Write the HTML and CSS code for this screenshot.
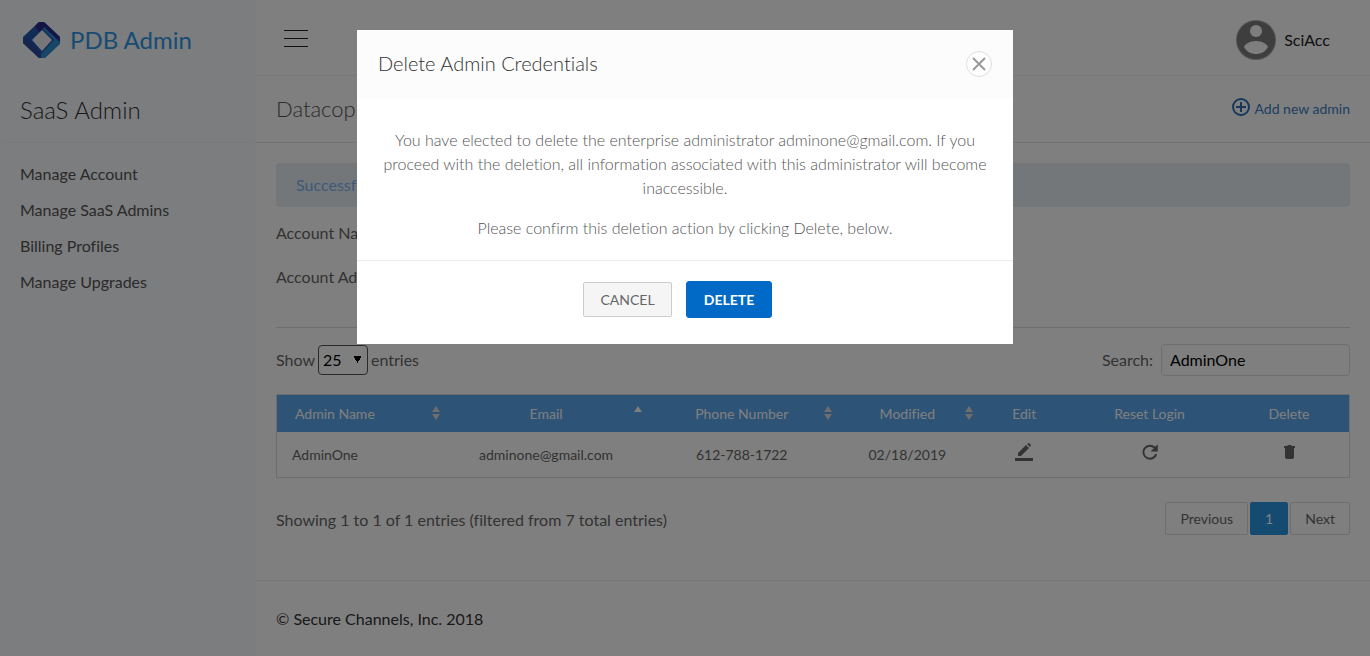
FILE: index.html
```html
<!DOCTYPE html>
<html lang="en">
<head>
<meta charset="utf-8">
<title>PDB Admin</title>
<link rel="stylesheet" href="styles.css">
</head>
<body>
<div class="app">
  <aside class="sidebar">
    <div class="sidebar-head">
      <a class="brand" href="#">
        <svg class="brand-logo" viewBox="0 0 37 36" aria-hidden="true">
          <path fill="#2457ae" d="M16 0h5l16 15v6L21 36h-5L0 21v-6z"/>
          <path fill="#28288c" d="M16 0h5l16 15v4l-4 2L21 6l-5 4-4-6z"/>
          <path fill="#2c8fd0" d="M21 5l16 15v2L22 36h-4l-1-3 14-15-11-11z"/>
          <path fill="#2a4a9c" d="M0 17l4-1 14 15v5h-2L0 21z"/>
          <path fill="#eeeef2" d="M19 8l10 10-10 11L9 18z"/>
        </svg>
        <span>PDB Admin</span>
      </a>
      <h2 class="sidebar-title">SaaS Admin</h2>
    </div>
    <nav class="menu">
      <a href="#">Manage Account</a>
      <a href="#">Manage SaaS Admins</a>
      <a href="#">Billing Profiles</a>
      <a href="#">Manage Upgrades</a>
    </nav>
  </aside>
  <div class="page">
    <header class="topbar">
      <button class="burger" type="button" aria-label="Toggle menu"><i></i><i></i><i></i></button>
      <a class="user" href="#">
        <svg class="avatar" viewBox="0 0 40 40" aria-hidden="true">
          <circle cx="20" cy="20" r="20" fill="#a6a6ac"/>
          <circle cx="20" cy="20" r="19" fill="#7c7c7c"/>
          <circle cx="20" cy="11" r="6" fill="#fcfcfc"/>
          <path fill="#fcfcfc" d="M8 27c1-3 6-6 12-6s11 3 12 6c-3 5-7 7-12 7S11 32 8 27z"/>
        </svg>
        <span>SciAcc</span>
      </a>
    </header>
    <div class="titlebar">
      <h1>Datacop</h1>
      <a class="add-link" href="#">
        <svg viewBox="1 1 18 18" aria-hidden="true"><circle cx="10" cy="10" r="8"/><path d="M10 5v10M5 10h10"/></svg>
        <span>Add new admin</span>
      </a>
    </div>
    <main class="content">
      <div class="alert">Successful</div>
      <div class="detail">Account Name</div>
      <div class="detail">Account Admin</div>
      <hr class="rule">
      <div class="controls">
        <label class="length">Show
          <select><option>25</option><option>50</option></select>
          entries</label>
        <label class="search">Search: <input type="text" value="AdminOne"></label>
      </div>
      <table class="grid">
        <colgroup><col class="c-name"><col class="c-email"><col class="c-phone"><col class="c-mod"><col class="c-edit"><col class="c-reset"><col class="c-delete"></colgroup>
        <thead>
          <tr>
            <th class="sortable left">Admin Name<svg class="sort" viewBox="0 0 8 14"><path d="M4 0l4 6H0zM0 8h8l-4 6z"/></svg></th>
            <th class="sortable">Email<svg class="sort on" viewBox="0 0 8 14"><path d="M4 0l4 6H0z"/></svg></th>
            <th class="sortable">Phone Number<svg class="sort" viewBox="0 0 8 14"><path d="M4 0l4 6H0zM0 8h8l-4 6z"/></svg></th>
            <th class="sortable">Modified<svg class="sort" viewBox="0 0 8 14"><path d="M4 0l4 6H0zM0 8h8l-4 6z"/></svg></th>
            <th>Edit</th>
            <th>Reset Login</th>
            <th>Delete</th>
          </tr>
        </thead>
        <tbody>
          <tr>
            <td class="left">AdminOne</td>
            <td>adminone@gmail.com</td>
            <td>612-788-1722</td>
            <td>02/18/2019</td>
            <td><button class="icon" type="button" aria-label="Edit"><svg viewBox="0 0 20 20"><path d="M1 16h18v3H1zM4 14v-3l8-8 3 3-8 8zM13 2l2-1 2 2-1 2z"/></svg></button></td>
            <td><button class="icon" type="button" aria-label="Reset login"><svg viewBox="0 0 20 20"><path d="M15.200 4.800A7.500 7.500 0 1 0 17.300 12h-2.200a5.500 5.500 0 1 1-1.300-5.700L10.500 9.500h7.300V2.200z"/></svg></button></td>
            <td><button class="icon" type="button" aria-label="Delete"><svg viewBox="0 0 20 20"><path d="M5 4h3l1-1h3l1 1h3v2H5zM6 6h9v9q0 2-2 2H8q-2 0-2-2z"/></svg></button></td>
          </tr>
        </tbody>
      </table>
      <div class="summary">
        <p>Showing 1 to 1 of 1 entries (filtered from 7 total entries)</p>
        <nav class="pager">
          <button type="button">Previous</button>
          <button type="button" class="current">1</button>
          <button type="button">Next</button>
        </nav>
      </div>
    </main>
    <footer class="footer">© Secure Channels, Inc. 2018</footer>
  </div>
</div>
<div class="overlay">
  <section class="dialog" role="dialog" aria-modal="true" aria-labelledby="dialog-title">
    <header class="dialog-head">
      <h2 id="dialog-title">Delete Admin Credentials</h2>
      <button class="close" type="button" aria-label="Close"><svg viewBox="0 0 14 14"><path d="M1 1l12 12M13 1L1 13"/></svg></button>
    </header>
    <div class="dialog-body">
      <p>You have elected to delete the enterprise administrator adminone@gmail.com. If you proceed with the deletion, all information associated with this administrator will become inaccessible.</p>
      <p>Please confirm this deletion action by clicking Delete, below.</p>
    </div>
    <footer class="dialog-foot">
      <button class="btn" type="button">CANCEL</button>
      <button class="btn primary" type="button">DELETE</button>
    </footer>
  </section>
</div>
</body>
</html>
```
FILE: styles.css
```css
* { box-sizing: border-box; }
body { margin: 0; font: 16px/24px Lato, "Liberation Sans", sans-serif; font-variant-ligatures: none; color: #666; background: #fff; }
h1, h2, p { margin: 0; font-weight: 300; }
a { text-decoration: none; color: inherit; }
button, input, select { font: inherit; color: inherit; }
button { cursor: pointer; }

.app { display: flex; min-height: 100vh; }
.sidebar { width: 256px; flex: none; background: #f8fafd; }
.sidebar-head { border-bottom: 1px solid #f0f2f5; border-radius: 0 0 6px 6px; }
.brand { display: flex; align-items: center; gap: 10px; height: 76px; padding: 4px 23px 0; font-size: 24px; color: #3097e6; }
.brand-logo { width: 37px; height: 36px; }
.sidebar-title { padding: 16px 20px 14px; font-size: 24px; line-height: 36px; color: #333; }
.menu { display: flex; flex-direction: column; gap: 12px; padding: 19px 20px; color: #555; }

.page { flex: 1; min-width: 0; display: flex; flex-direction: column; }
.topbar { display: flex; justify-content: space-between; align-items: center; height: 76px; padding: 4px 40px 0 28px; background: #fefefe; border-bottom: 1px solid #f2f2f2; }
.burger { display: grid; gap: 7px; padding: 0 0 2px; border: 0; background: none; width: 24px; }
.burger i { display: block; height: 1px; background: #222; }
.user { display: flex; align-items: center; gap: 8px; color: #222; }
.avatar { width: 40px; height: 40px; }
.titlebar { display: flex; justify-content: space-between; align-items: center; height: 67px; padding: 0 20px; border-bottom: 1px solid #e6e6e6; }
.titlebar h1 { font-size: 22px; line-height: 32px; color: #555; }
.add-link { display: flex; align-items: center; gap: 4px; font-size: 14px; color: #3b7cc4; }
.add-link svg { width: 18px; height: 18px; margin-bottom: 4px; fill: none; stroke: #2b6fb8; stroke-width: 2; }

.content { padding: 20px 20px 45px; }
.alert { height: 44px; padding: 10px 20px; margin-bottom: 14px; border-radius: 4px; background: #e6eef3; color: #7db2f0; }
.detail { margin-bottom: 20px; }
.rule { margin: 38px 0 16px; border: 0; border-top: 1px solid #ddd; }
.controls { display: flex; justify-content: space-between; height: 32px; margin-bottom: 18px; }
.controls label { display: flex; align-items: center; }
.length { gap: 3px; }
.length select { width: 50px; height: 30px; padding: 0 12px 0 4px; border: 1px solid #555; border-radius: 4px; color: #000; appearance: none; background: #fff conic-gradient(from -30deg at 50% 100%, #000 0 60deg, #fff 0) right 6px top 10px / 7px 7px no-repeat; }
.search { gap: 8px; }
.search input { width: 189px; height: 32px; padding: 0 8px 2px; border: 1px solid #ddd; border-radius: 4px; background: #fff; color: #000; }

.grid { width: 100%; table-layout: fixed; border-collapse: separate; border-spacing: 0; border: 1px solid #ddd; font-size: 14px; line-height: 20px; text-align: center; }
.c-name { width: 15.700%; }
.c-email { width: 18.800%; }
.c-phone { width: 17.700%; }
.c-mod { width: 13.200%; }
.c-edit { width: 8.600%; }
.c-reset { width: 14.800%; }
.c-delete { width: 11.200%; }
.grid th { height: 37px; padding: 0 18px; background: #5aa6ec; color: #fff; font-weight: 400; }
.grid td { height: 45px; padding: 0 15px; }
.grid .left { text-align: left; }
.grid .sortable { position: relative; }
.sort { position: absolute; right: 5px; top: 11px; width: 8px; height: 14px; fill: #ddd; }
.sort.on { fill: #fff; }
.icon { display: inline-grid; padding: 0; border: 0; background: none; }
.icon svg { width: 20px; height: 20px; fill: #666; }

.summary { display: flex; justify-content: space-between; align-items: center; margin-top: 24px; }
.summary p { font-weight: 400; padding-top: 2px; }
.pager { display: flex; gap: 2px; }
.pager button { height: 33px; padding: 0 14px; border: 1px solid #ddd; border-radius: 2px; background: #fff; font-size: 14px; }
.pager .current { background: #2a94e3; border-color: #2a94e3; color: #fff; }
.footer { padding: 26px 20px; border-top: 1px solid #eee; color: #333; }

.overlay { position: fixed; inset: 0; background: rgba(0, 0, 0, .5); }
.dialog { width: 656px; max-width: 100%; margin: 30px auto; background: #fff; }
.dialog-head { display: flex; justify-content: space-between; align-items: center; height: 68px; padding: 0 21px; background: #fcfcfc; }
.dialog-head h2 { padding-bottom: 2px; font-size: 20px; line-height: 24px; color: #333; }
.close { display: grid; place-items: center; width: 26px; height: 26px; padding: 0; border: 1px solid #ddd; border-radius: 50%; background: #fff; }
.close svg { width: 14px; height: 14px; stroke: #999; stroke-width: 2; }
.dialog-body { display: grid; gap: 16px; padding: 30px 20px 20px; text-align: center; color: #555; }
.dialog-foot { display: flex; justify-content: center; align-items: center; gap: 14px; padding: 20px 15px 26px 0; border-top: 1px solid #ebebf2; }
.btn { min-width: 89px; height: 35px; padding: 0 14px; border: 1px solid #ccc; border-radius: 2px; background: #f5f5f5; font-size: 14px; color: #666; }
.btn.primary { min-width: 86px; height: 37px; border-color: #006ac6; border-radius: 3px; background: #006ac6; color: #fff; font-weight: 700; }
```
